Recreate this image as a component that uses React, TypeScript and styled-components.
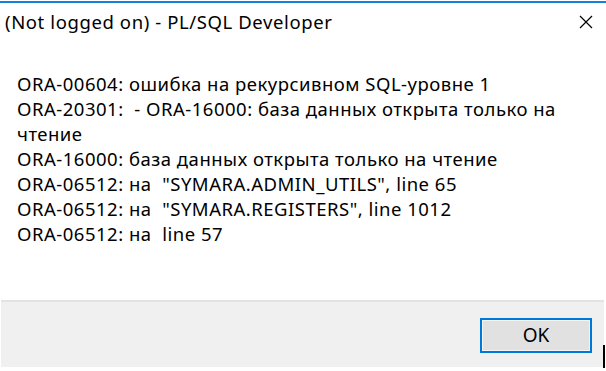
import React from "react";
import styled, { createGlobalStyle } from "styled-components";

const Global = createGlobalStyle`
  html, body { margin: 0; padding: 0; background: #ffffff; }
  #root { width: 606px; height: 371px; }
`;

const Window = styled.div`
  width: 606px;
  height: 371px;
  box-sizing: border-box;
  background: #ffffff;
  display: flex;
  flex-direction: column;
  font-family: "Noto Sans", "Segoe UI", sans-serif;
  color: #000000;
  padding-top: 1px;
  overflow: hidden;
`;

const TitleBar = styled.div`
  border-top: 2px solid #1a80d6;
  height: 45px;
  display: flex;
  align-items: flex-start;
  justify-content: space-between;
  padding: 0 13px 0 5px;
`;

const Title = styled.div`
  font-size: 18.5px;
  letter-spacing: 0.6px;
  line-height: 22px;
  margin-top: 8px;
  white-space: nowrap;
`;

const CloseButton = styled.button`
  border: none;
  background: transparent;
  padding: 0;
  margin-top: 12px;
  width: 14px;
  height: 14px;
  display: flex;
  cursor: default;
`;

const Messages = styled.div`
  padding: 23px 0 0 17px;
  font-size: 18.5px;
  letter-spacing: 0.5px;
  line-height: 25px;
  white-space: pre;
`;

const Line = styled.div``;

const Footer = styled.div`
  margin: auto 2px 4px 1px;
  height: 67px;
  box-sizing: border-box;
  background: #f0f0f0;
  border-top: 2px solid #e3e3e3;
  display: flex;
  align-items: center;
  justify-content: flex-end;
  padding: 2px 12px 0 0;
  position: relative;
`;

const OkButton = styled.button`
  width: 112px;
  height: 35px;
  box-sizing: border-box;
  background: #e1e1e1;
  border: 2px solid #0078d7;
  box-shadow: inset 0 0 0 1px #f4f4f4;
  font-family: "Noto Sans", "Segoe UI", sans-serif;
  font-size: 19px;
  line-height: 1;
  color: #000000;
  padding: 0;
`;

const Caret = styled.span`
  position: absolute;
  right: -1px;
  bottom: -1px;
  width: 2px;
  height: 23px;
  background: #000000;
`;

const lines = [
  "ORA-00604: ошибка на рекурсивном SQL-уровне 1",
  "ORA-20301:  - ORA-16000: база данных открыта только на",
  "чтение",
  "ORA-16000: база данных открыта только на чтение",
  'ORA-06512: на  "SYMARA.ADMIN_UTILS", line 65',
  'ORA-06512: на  "SYMARA.REGISTERS", line 1012',
  "ORA-06512: на  line 57",
];

export default function App() {
  return (
    <>
      <Global />
      <Window>
        <TitleBar>
          <Title>(Not logged on) - PL/SQL Developer</Title>
          <CloseButton aria-label="Close">
            <svg width="14" height="14" viewBox="0 0 14 14">
              <path d="M1 1 L13 13 M13 1 L1 13" stroke="#000" strokeWidth="1.2" fill="none" />
            </svg>
          </CloseButton>
        </TitleBar>
        <Messages>
          {lines.map((l, i) => (
            <Line key={i}>{l}</Line>
          ))}
        </Messages>
        <Footer>
          <OkButton>OK</OkButton>
          <Caret />
        </Footer>
      </Window>
    </>
  );
}
